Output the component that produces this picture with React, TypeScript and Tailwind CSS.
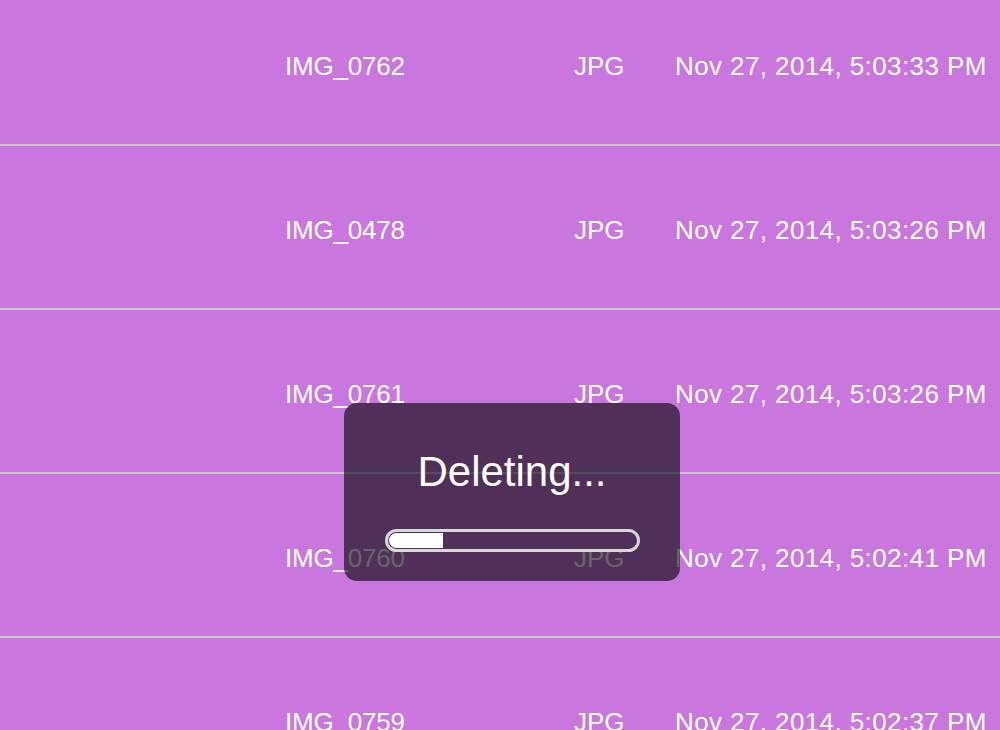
import React from "react";

const rows = [
  { name: "IMG_0762", kind: "JPG", date: "Nov 27, 2014, 5:03:33 PM" },
  { name: "IMG_0478", kind: "JPG", date: "Nov 27, 2014, 5:03:26 PM" },
  { name: "IMG_0761", kind: "JPG", date: "Nov 27, 2014, 5:03:26 PM" },
  { name: "IMG_0760", kind: "JPG", date: "Nov 27, 2014, 5:02:41 PM" },
  { name: "IMG_0759", kind: "JPG", date: "Nov 27, 2014, 5:02:37 PM" },
];

export default function App() {
  const progress = 22;
  return (
    <div
      className="relative w-[1000px] h-[730px] overflow-hidden bg-[#c976de] text-white"
      style={{ fontFamily: '"Liberation Sans", Arial, sans-serif' }}
    >
      <div className="-mt-[18px] flex flex-col">
        {rows.map((row) => (
          <div
            key={row.name}
            className="flex h-[164px] items-center border-b-2 border-[#c8c8c8] pt-[6px] text-[26px]"
          >
            <div className="w-[285px] shrink-0" />
            <div className="w-[289px] shrink-0 tracking-[-0.2px]">{row.name}</div>
            <div className="w-[101px] shrink-0">{row.kind}</div>
            <div className="whitespace-nowrap tracking-[0.4px]">{row.date}</div>
          </div>
        ))}
      </div>

      {/* deleting overlay */}
      <div className="absolute left-[344px] top-[403px] flex h-[178px] w-[336px] flex-col items-center rounded-[13px] bg-black/60">
        <div className="mt-[41px] text-[42px] leading-[56px]">Deleting...</div>
        <div className="mt-[29px] h-[23px] w-[255px] rounded-full border-[3px] border-[#d8d8d8] p-[1px]">
          <div
            className="h-full rounded-l-full bg-white"
            style={{ width: `${progress}%` }}
          />
        </div>
      </div>
    </div>
  );
}
